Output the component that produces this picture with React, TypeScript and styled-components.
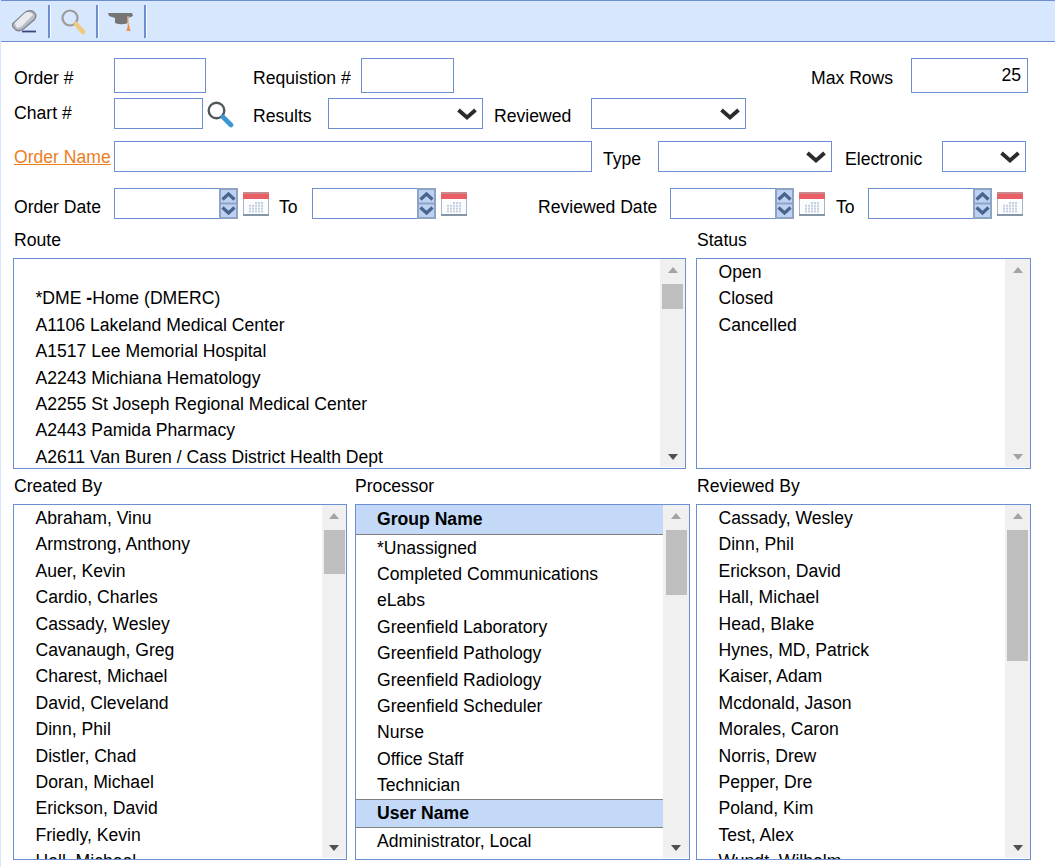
import React from "react";
import styled, { createGlobalStyle } from "styled-components";

const Global = createGlobalStyle`
  html, body { margin: 0; padding: 0; background: #fff; }
  body { font-family: "Liberation Sans", Arial, sans-serif; font-size: 17.6px; color: #000; width: 1055px; height: 867px; overflow: hidden; }
`;

const BLUE = "#6c8fd1";

const Page = styled.div`
  display: flex;
  flex-direction: column;
  width: 1055px;
  height: 867px;
  overflow: hidden;
  border-left: 1px solid #d8e7fd;
  box-sizing: border-box;
`;
const Toolbar = styled.div`
  display: flex;
  align-items: center;
  height: 42px;
  box-sizing: border-box;
  background: #d7e7fd;
  border-top: 1px solid ${BLUE};
  border-bottom: 1px solid ${BLUE};
  margin-left: -1px;
`;
const ToolSlot = styled.div`
  width: 48px;
  height: 33px;
  display: flex;
  align-items: center;
  justify-content: center;
  border-right: 2px solid #6c8fd1;
  box-sizing: border-box;
  box-shadow: 1px 0 0 #fff;
  &:first-child { width: 50px; }
`;
const Form = styled.div`
  display: flex;
  flex-direction: column;
  padding: 16px 0 0 13px;
`;
const Row = styled.div<{ $h: number; $mt?: number }>`
  display: flex;
  align-items: center;
  height: ${(p) => p.$h}px;
  margin-top: ${(p) => p.$mt ?? 0}px;
`;
const Label = styled.span<{ $w: number; $dy?: number }>`
  width: ${(p) => p.$w}px;
  flex: none;
  white-space: nowrap;
  line-height: 20px;
  position: relative;
  top: ${(p) => p.$dy ?? 0}px;
`;
const LinkLabel = styled(Label)`
  color: #ee7d1e;
  text-decoration: underline;
`;
const Input = styled.div<{ $w: number; $h: number }>`
  width: ${(p) => p.$w}px;
  height: ${(p) => p.$h}px;
  flex: none;
  box-sizing: border-box;
  border: 1px solid ${BLUE};
  background: #fff;
  text-align: right;
  padding: 6px 6px 0 0;
  line-height: 20px;
`;
const Gap = styled.span<{ $w: number }>`
  width: ${(p) => p.$w}px;
  flex: none;
`;
const SelectBox = styled.div<{ $w: number }>`
  width: ${(p) => p.$w}px;
  height: 31px;
  flex: none;
  box-sizing: border-box;
  border: 1px solid ${BLUE};
  background: #fff;
  display: flex;
  align-items: center;
  justify-content: flex-end;
  padding-right: 4px;
`;
const DateBox = styled.div`
  width: 105px;
  height: 31px;
  flex: none;
  box-sizing: border-box;
  border: 1px solid ${BLUE};
  border-right: none;
`;
const Spinner = styled.div`
  width: 19px;
  height: 31px;
  flex: none;
  display: flex;
`;
const ListLabels = styled.div<{ $mt: number }>`
  display: flex;
  height: 20px;
  line-height: 20px;
  margin-left: -1px;
  margin-top: ${(p) => p.$mt}px;
`;
const ListLabel = styled.div<{ $w: number }>`
  width: ${(p) => p.$w}px;
  flex: none;
  padding-left: 1px;
  box-sizing: border-box;
`;
const ListRow = styled.div<{ $mt: number }>`
  display: flex;
  margin-left: -1px;
  margin-top: ${(p) => p.$mt}px;
`;
const ListBox = styled.div<{ $w: number; $h: number; $mr: number }>`
  width: ${(p) => p.$w}px;
  height: ${(p) => p.$h}px;
  margin-right: ${(p) => p.$mr}px;
  flex: none;
  box-sizing: border-box;
  border: 1px solid ${BLUE};
  display: flex;
  overflow: hidden;
  background: #fff;
`;
const ListBody = styled.div`
  flex: 1;
  min-width: 0;
  overflow: hidden;
`;
const Item = styled.div<{ $pad: number }>`
  height: 26.4px;
  line-height: 26.4px;
  padding-left: ${(p) => p.$pad}px;
  white-space: nowrap;
`;
const Dash = styled.b`
  font-weight: 700;
`;
const GroupHead = styled.div`
  height: 29.7px;
  line-height: 28px;
  box-sizing: border-box;
  background: #c3d9f7;
  font-weight: 700;
  padding-left: 21px;
  border-bottom: 1px solid #808080;
  white-space: nowrap;
`;
const UserHead = styled(GroupHead)`
  border-top: 1px solid #808080;
  line-height: 27px;
`;
const Track = styled.div<{ $w: number }>`
  width: ${(p) => p.$w}px;
  flex: none;
  background: #f0f0f0;
  display: flex;
  flex-direction: column;
  align-items: center;
  margin-bottom: 1px;
`;
const Arrow = styled.div<{ $down?: boolean; $off?: boolean }>`
  width: 0;
  height: 0;
  flex: none;
  border-left: 5.5px solid transparent;
  border-right: 5.5px solid transparent;
  ${(p) =>
    p.$down
      ? `border-top: 6px solid ${p.$off ? "#a3a3a3" : "#505050"}; margin-bottom: 7px; margin-top: auto;`
      : `border-bottom: 6px solid #a3a3a3; margin-top: 8px;`}
`;
const Thumb = styled.div<{ $h: number; $mt: number }>`
  width: 21px;
  height: ${(p) => p.$h}px;
  margin-top: ${(p) => p.$mt}px;
  background: #bebebe;
  flex: none;
`;

const Chevron = () => (
  <svg width="22" height="14" viewBox="0 0 22 14">
    <path d="M2.5 3 L11 10.5 L19.5 3" fill="none" stroke="#2b2b2b" strokeWidth="3.8" />
  </svg>
);

const SpinnerIcon = () => (
  <svg width="19" height="31" viewBox="0 0 19 31">
    <rect width="19" height="31" fill="#8ea4c2" />
    <rect x="2" y="2" width="15" height="12.5" fill="#bdd1f3" />
    <rect x="2" y="16.5" width="15" height="12.5" fill="#bdd1f3" />
    <path d="M3.5 11.5 L9.5 6 L15.5 11.5" fill="none" stroke="#47648c" strokeWidth="3.2" />
    <path d="M3.5 19.5 L9.5 25 L15.5 19.5" fill="none" stroke="#47648c" strokeWidth="3.2" />
  </svg>
);

const CalendarIcon = () => (
  <svg width="26" height="24" viewBox="0 0 26 24" style={{ marginLeft: 5, flex: "none" }}>
    <rect x="0.5" y="0.5" width="25" height="23" fill="#fbfcfd" stroke="#a8b6c4" />
    <rect x="0" y="0" width="26" height="2" fill="#c98a8e" />
    <rect x="0" y="2" width="26" height="5" fill="#ea5f66" />
    <rect x="0" y="22" width="26" height="2" fill="#8496a8" />
    {[0, 1, 2, 3].map((r) =>
      [0, 1, 2, 3, 4].map((c) =>
        r === 0 && c < 2 ? null : (
          <rect key={`${r}${c}`} x={6 + c * 3} y={10 + r * 2.8} width="2" height="2" fill="#c3cfe0" />
        )
      )
    )}
  </svg>
);

const SearchIcon = () => (
  <svg width="28" height="28" viewBox="0 0 28 28" style={{ marginLeft: 3, flex: "none", marginRight: -1 }}>
    <circle cx="10.5" cy="10.5" r="7.8" fill="#fff" stroke="#50585c" strokeWidth="2.4" />
    <path d="M17 17 L25 25" stroke="#3a97d3" strokeWidth="4.6" strokeLinecap="round" />
  </svg>
);

const EraserIcon = () => (
  <svg width="26" height="24" viewBox="0 0 26 24">
    <path d="M1.5 15 L14 3.5 Q18 0.5 22 2.5 L24.5 5 Q25.5 8.5 23 11 L13 19.5 Q9 23 5 21 L2 18 Z" fill="#b9bdc8" stroke="#80848f" strokeWidth="1.4" />
    <path d="M3.5 14 L14 4 Q17 2 20.5 4 L22 6 L10.5 17.5 L6 19 Z" fill="#e9ebef" />
    <path d="M11 22.5 L25 22.5" stroke="#3f4480" strokeWidth="1.8" />
  </svg>
);
const MagnifyIcon = () => (
  <svg width="26" height="27" viewBox="0 0 26 27">
    <circle cx="10" cy="10" r="7.5" fill="none" stroke="#9b9b9b" strokeWidth="2.2" />
    <path d="M16 16 L23 24" stroke="#eecb7c" strokeWidth="4.6" strokeLinecap="round" />
  </svg>
);
const CapIcon = () => (
  <svg width="26" height="22" viewBox="0 0 26 22">
    <path d="M0 3 L24 3 L25 6 L20 8 L20 13 Q13 15.5 7 13 L7 8 L1 6 Z" fill="#757575" />
    <path d="M20 6 L20 15" stroke="#e9b27d" strokeWidth="1.4" />
    <path d="M18.5 21 L20.5 13 L22.5 21 Z" fill="#ef8f45" />
  </svg>
);

const Select = ({ w }: { w: number }) => (
  <SelectBox $w={w}>
    <Chevron />
  </SelectBox>
);
const DateField = () => (
  <>
    <DateBox />
    <Spinner>
      <SpinnerIcon />
    </Spinner>
    <CalendarIcon />
  </>
);

const route = [
  "A1106 Lakeland Medical Center",
  "A1517 Lee Memorial Hospital",
  "A2243 Michiana Hematology",
  "A2255 St Joseph Regional Medical Center",
  "A2443 Pamida Pharmacy",
  "A2611 Van Buren / Cass District Health Dept",
];
const status = ["Open", "Closed", "Cancelled"];
const created = [
  "Abraham, Vinu", "Armstrong, Anthony", "Auer, Kevin", "Cardio, Charles", "Cassady, Wesley",
  "Cavanaugh, Greg", "Charest, Michael", "David, Cleveland", "Dinn, Phil", "Distler, Chad",
  "Doran, Michael", "Erickson, David", "Friedly, Kevin", "Hall, Michael",
];
const groups = [
  "*Unassigned", "Completed Communications", "eLabs", "Greenfield Laboratory", "Greenfield Pathology",
  "Greenfield Radiology", "Greenfield Scheduler", "Nurse", "Office Staff", "Technician",
];
const reviewed = [
  "Cassady, Wesley", "Dinn, Phil", "Erickson, David", "Hall, Michael", "Head, Blake", "Hynes, MD, Patrick",
  "Kaiser, Adam", "Mcdonald, Jason", "Morales, Caron", "Norris, Drew", "Pepper, Dre", "Poland, Kim",
  "Test, Alex", "Wundt, Wilhelm",
];

const Items = ({ list, pad = 21.5 }: { list: string[]; pad?: number }) => (
  <>
    {list.map((t, i) => (
      <Item $pad={pad} key={i}>{t}</Item>
    ))}
  </>
);

const Scroll = ({ w, h, mt, off }: { w: number; h: number; mt: number; off?: boolean }) => (
  <Track $w={w}>
    <Arrow />
    <Thumb $h={h} $mt={mt} />
    <Arrow $down $off={off} />
  </Track>
);

export default function App() {
  return (
    <Page>
      <Global />
      <Toolbar>
        <ToolSlot><EraserIcon /></ToolSlot>
        <ToolSlot><MagnifyIcon /></ToolSlot>
        <ToolSlot><CapIcon /></ToolSlot>
      </Toolbar>
      <Form>
        <Row $h={35}>
          <Label $w={100} $dy={2}>Order #</Label>
          <Input $w={92} $h={35} />
          <Gap $w={47} />
          <Label $w={108} $dy={2}>Requistion #</Label>
          <Input $w={93} $h={35} />
          <Gap $w={357} />
          <Label $w={100} $dy={2}>Max Rows</Label>
          <Input $w={117} $h={35}>25</Input>
        </Row>
        <Row $h={31} $mt={5}>
          <Label $w={100} $dy={-1}>Chart #</Label>
          <Input $w={89} $h={31} />
          <SearchIcon />
          <Gap $w={20} />
          <Label $w={75} $dy={2}>Results</Label>
          <Select w={155} />
          <Gap $w={11} />
          <Label $w={97} $dy={2}>Reviewed</Label>
          <Select w={155} />
        </Row>
        <Row $h={31} $mt={12}>
          <LinkLabel as="span" $w={100}>Order Name</LinkLabel>
          <Input $w={478} $h={31} />
          <Gap $w={11} />
          <Label $w={55} $dy={2}>Type</Label>
          <Select w={174} />
          <Gap $w={13} />
          <Label $w={97} $dy={2}>Electronic</Label>
          <Select w={84} />
        </Row>
        <Row $h={31} $mt={16}>
          <Label $w={100} $dy={3}>Order Date</Label>
          <DateField />
          <Gap $w={10} />
          <Label $w={33} $dy={3}>To</Label>
          <DateField />
          <Gap $w={71} />
          <Label $w={132} $dy={3}>Reviewed Date</Label>
          <DateField />
          <Gap $w={11} />
          <Label $w={32} $dy={3}>To</Label>
          <DateField />
        </Row>
        <ListLabels $mt={11}>
          <ListLabel $w={683}>Route</ListLabel>
          <ListLabel $w={300}>Status</ListLabel>
        </ListLabels>
        <ListRow $mt={8}>
          <ListBox $w={673} $h={211} $mr={10}>
            <ListBody>
              <Item $pad={21.5}>{"\u00a0"}</Item>
              <Item $pad={21.5}>*DME <Dash>-</Dash>Home (DMERC)</Item>
              <Items list={route} />
            </ListBody>
            <Scroll w={25} h={25} mt={11} />
          </ListBox>
          <ListBox $w={335} $h={211} $mr={0}>
            <ListBody>
              <Items list={status} />
            </ListBody>
            <Scroll w={25} h={0} mt={0} off />
          </ListBox>
        </ListRow>
        <ListLabels $mt={7}>
          <ListLabel $w={341}>Created By</ListLabel>
          <ListLabel $w={342}>Processor</ListLabel>
          <ListLabel $w={300}>Reviewed By</ListLabel>
        </ListLabels>
        <ListRow $mt={8}>
          <ListBox $w={334} $h={356} $mr={8}>
            <ListBody>
              <Items list={created} />
            </ListBody>
            <Scroll w={24} h={44} mt={11} />
          </ListBox>
          <ListBox $w={335} $h={356} $mr={6}>
            <ListBody>
              <GroupHead>Group Name</GroupHead>
              <Items list={groups} pad={21} />
              <UserHead>User Name</UserHead>
              <Items list={["Administrator, Local"]} pad={21} />
            </ListBody>
            <Scroll w={26} h={65} mt={11} />
          </ListBox>
          <ListBox $w={335} $h={356} $mr={0}>
            <ListBody>
              <Items list={reviewed} />
            </ListBody>
            <Scroll w={25} h={131} mt={11} />
          </ListBox>
        </ListRow>
      </Form>
    </Page>
  );
}
